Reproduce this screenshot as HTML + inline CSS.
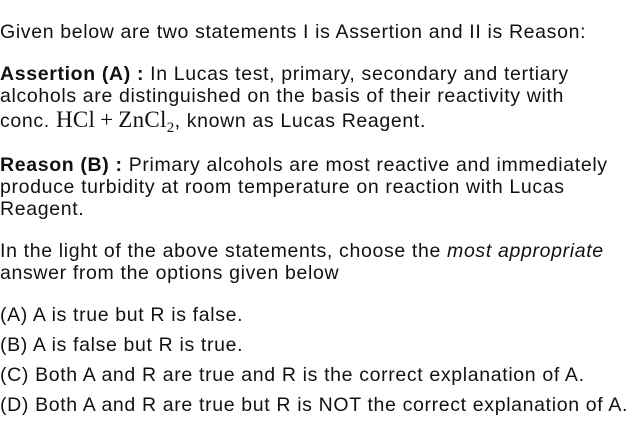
<!DOCTYPE html>
<html><head><meta charset="utf-8"><style>
html,body{margin:0;padding:0;background:#fff;width:628px;height:423px;overflow:hidden}
body{position:relative;font-family:"Liberation Sans","DejaVu Sans",sans-serif;font-size:19.5px;color:#111;letter-spacing:0.65px}
.l{position:absolute;left:0;white-space:nowrap;line-height:22px;height:22px}
b{font-weight:bold}
.m{font-family:"Liberation Serif",serif;font-size:23px;letter-spacing:0.3px}
sub{font-size:15px;vertical-align:-5px;line-height:0}
</style></head><body>
<div class="l" style="top:21px">Given below are two statements I is Assertion and II is Reason:</div>
<div class="l" style="top:63px"><b>Assertion (A) :</b> In Lucas test, primary, secondary and tertiary</div>
<div class="l" style="top:85px">alcohols are distinguished on the basis of their reactivity with</div>
<div class="l" style="top:109px">conc. <span class="m">HCl&#8201;+&#8201;ZnCl<sub>2</sub></span>, known as Lucas Reagent.</div>
<div class="l" style="top:154px"><b>Reason (B) :</b> Primary alcohols are most reactive and immediately</div>
<div class="l" style="top:176px">produce turbidity at room temperature on reaction with Lucas</div>
<div class="l" style="top:198px">Reagent.</div>
<div class="l" style="top:240px">In the light of the above statements, choose the <i>most appropriate</i></div>
<div class="l" style="top:262px">answer from the options given below</div>
<div class="l" style="top:304px">(A) A is true but R is false.</div>
<div class="l" style="top:334px">(B) A is false but R is true.</div>
<div class="l" style="top:364px">(C) Both A and R are true and R is the correct explanation of A.</div>
<div class="l" style="top:394px">(D) Both A and R are true but R is NOT the correct explanation of A.</div>
</body></html>
